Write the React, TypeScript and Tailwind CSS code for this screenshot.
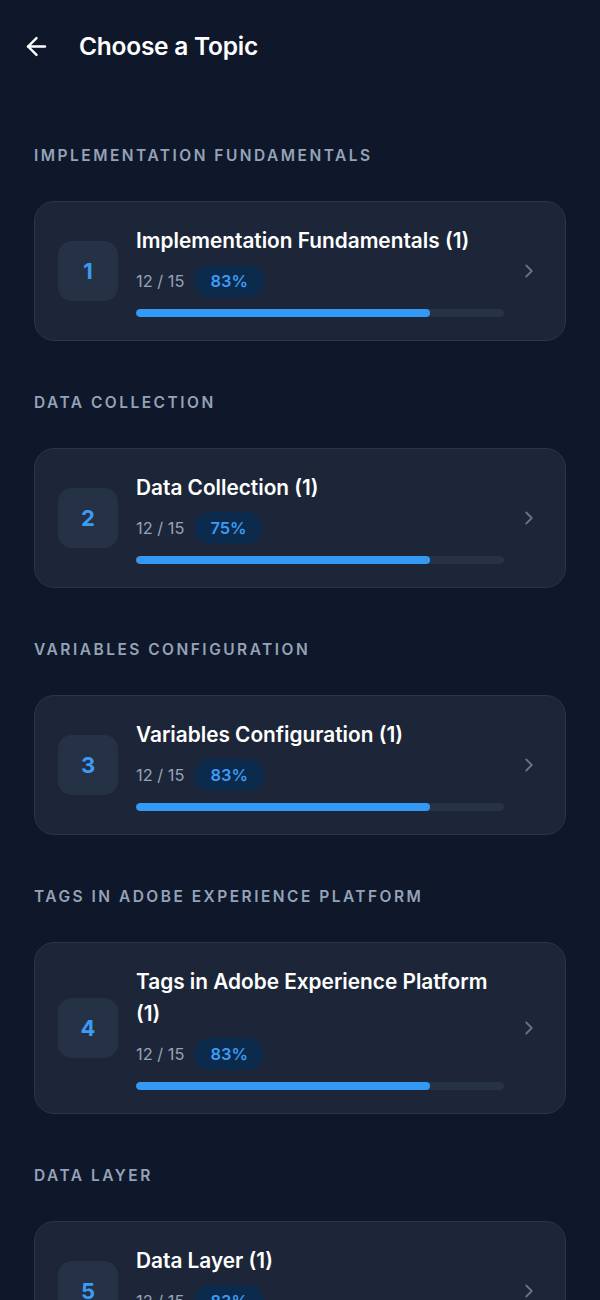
import { ArrowLeft, ChevronRight } from "lucide-react";

type Topic = {
  id: number;
  section: string;
  title: string;
  done: number;
  total: number;
  pct: number;
};

const TOPICS: Topic[] = [
  { id: 1, section: "Implementation Fundamentals", title: "Implementation Fundamentals (1)", done: 12, total: 15, pct: 83 },
  { id: 2, section: "Data Collection", title: "Data Collection (1)", done: 12, total: 15, pct: 75 },
  { id: 3, section: "Variables Configuration", title: "Variables Configuration (1)", done: 12, total: 15, pct: 83 },
  { id: 4, section: "Tags in Adobe Experience Platform", title: "Tags in Adobe Experience Platform (1)", done: 12, total: 15, pct: 83 },
  { id: 5, section: "Data Layer", title: "Data Layer (1)", done: 12, total: 15, pct: 83 },
];

function TopicCard({ topic }: { topic: Topic }) {
  const fill = (topic.done / topic.total) * 100;
  return (
    <div className="flex items-center rounded-[20px] border border-[#2a3548] bg-[#1c2638] py-[23px] pl-[23px] pr-[25px]">
      <div className="flex h-[60px] w-[60px] shrink-0 items-center justify-center rounded-[14px] bg-[#253145] text-[22px] font-bold text-[#3b9bf5]">
        {topic.id}
      </div>
      <div className="ml-[18px] min-w-0 flex-1">
        <div className="text-[20.8px] font-semibold leading-[32px] text-white">{topic.title}</div>
        <div className="mt-2 flex items-center gap-[10px]">
          <span className="text-[16.4px] text-[#94a3b8]">
            {topic.done} / {topic.total}
          </span>
          <span className="flex h-8 items-center rounded-full bg-[#0c2a4b] px-[16px] text-[16.4px] font-semibold text-[#3b9bf5]">
            {topic.pct}%
          </span>
        </div>
        <div className="mt-3 h-2 w-full overflow-hidden rounded-full bg-[#263246]">
          <div className="h-full rounded-full bg-[#3399f5]" style={{ width: `${fill}%` }} />
        </div>
      </div>
      <ChevronRight className="ml-[14px] shrink-0 text-[#64748b]" size={22} strokeWidth={2} />
    </div>
  );
}

export default function App() {
  return (
    <div
      className="min-h-[1300px] bg-[#0f172a] text-white"
      style={{ fontFamily: "Inter, 'Noto Sans', sans-serif" }}
    >
      {/* Header */}
      <div className="flex h-[92px] items-center pl-[22px]">
        <ArrowLeft size={29} strokeWidth={2} className="text-white" />
        <h1 className="ml-[28px] text-[24.5px] font-semibold tracking-[-0.01em]">Choose a Topic</h1>
      </div>

      {/* Sections */}
      <div className="px-[34px] pt-[54px]">
        {TOPICS.map((t) => (
          <section key={t.id} className="mb-[52px]">
            <h2 className="text-[15.5px] font-semibold uppercase leading-5 tracking-[0.16em] text-[#94a3b8]">
              {t.section}
            </h2>
            <div className="mt-[35px]">
              <TopicCard topic={t} />
            </div>
          </section>
        ))}
      </div>
    </div>
  );
}
